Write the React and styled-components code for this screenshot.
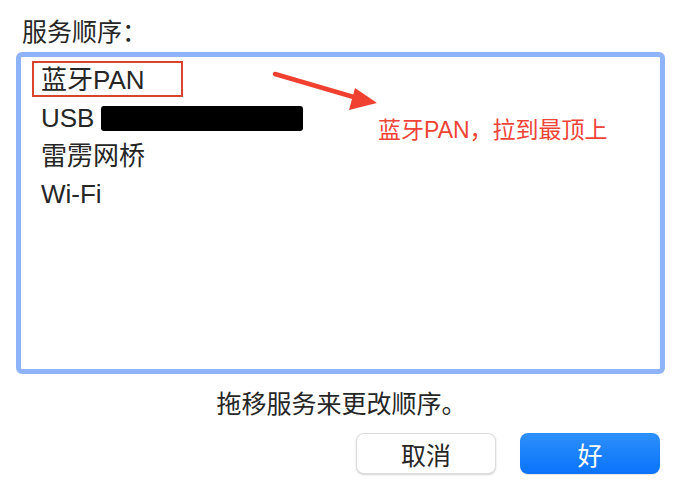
import React from 'react';
import styled, { createGlobalStyle } from 'styled-components';

const Global = createGlobalStyle`
  html, body {
    margin: 0;
    padding: 0;
    background: #ffffff;
  }
  body {
    font-family: "Liberation Sans", "Noto Sans CJK SC", sans-serif;
    color: #262626;
  }
`;

const Page = styled.div`
  width: 684px;
  height: 494px;
  box-sizing: border-box;
  padding: 16px 19px 0 16px;
  display: flex;
  flex-direction: column;
`;

const Title = styled.div`
  font-size: 25px;
  line-height: 32px;
  margin: 0 0 4px 6px;
`;

const ListBox = styled.div`
  position: relative;
  height: 322px;
  flex-shrink: 0;
  box-sizing: border-box;
  border: 5px solid #8fb3f9;
  border-radius: 6px;
  background: #fff;
  padding: 4px 0 0 20px;
`;

const Item = styled.div`
  font-size: 26px;
  line-height: 38px;
  height: 38px;
  display: flex;
  align-items: center;
  white-space: nowrap;
`;

const Redact = styled.span`
  display: inline-block;
  width: 202px;
  height: 25px;
  background: #000;
  border-radius: 3px;
  margin-left: 7px;
`;

const Highlight = styled.div`
  position: absolute;
  left: 11px;
  top: 4px;
  width: 151px;
  height: 36px;
  box-sizing: border-box;
  border: 2px solid #d8452c;
`;

const Arrow = styled.svg`
  position: absolute;
  left: 250px;
  top: 10px;
`;

const Note = styled.div`
  position: absolute;
  left: 357px;
  top: 59px;
  font-size: 23px;
  line-height: 28px;
  color: #ee4438;
  white-space: nowrap;
`;

const Hint = styled.div`
  text-align: center;
  font-size: 25px;
  line-height: 30px;
  margin-top: 15px;
  padding-left: 2px;
`;

const Buttons = styled.div`
  display: flex;
  justify-content: flex-end;
  gap: 24px;
  margin-top: 14px;
  padding-right: 5px;
`;

const Button = styled.button`
  width: 140px;
  height: 41px;
  box-sizing: border-box;
  border-radius: 8px;
  font-family: inherit;
  font-size: 25px;
  padding: 0;
  cursor: pointer;
  border: ${p => (p.primary ? 'none' : '1px solid #dcdcdc')};
  background: ${p => (p.primary ? 'linear-gradient(#2d90fa, #0a73fb)' : '#fff')};
  color: ${p => (p.primary ? '#fff' : '#262626')};
  box-shadow: ${p => (p.primary ? '0 1px 1px rgba(0,0,0,0.1)' : '0 1px 2px rgba(0,0,0,0.18)')};
`;

export default function App() {
  return (
    <>
      <Global />
      <Page>
        <Title>服务顺序：</Title>
        <ListBox>
          <Item>蓝牙PAN</Item>
          <Item>USB<Redact /></Item>
          <Item>雷雳网桥</Item>
          <Item>Wi-Fi</Item>
          <Highlight />
          <Arrow width="110" height="50" viewBox="0 0 110 50">
            <line x1="4" y1="7" x2="86" y2="31" stroke="#f0402f" strokeWidth="4.5" strokeLinecap="round" />
            <polygon points="106,36 84,21 78,43" fill="#f0402f" />
          </Arrow>
          <Note>蓝牙PAN，拉到最顶上</Note>
        </ListBox>
        <Hint>拖移服务来更改顺序。</Hint>
        <Buttons>
          <Button>取消</Button>
          <Button primary>好</Button>
        </Buttons>
      </Page>
    </>
  );
}
